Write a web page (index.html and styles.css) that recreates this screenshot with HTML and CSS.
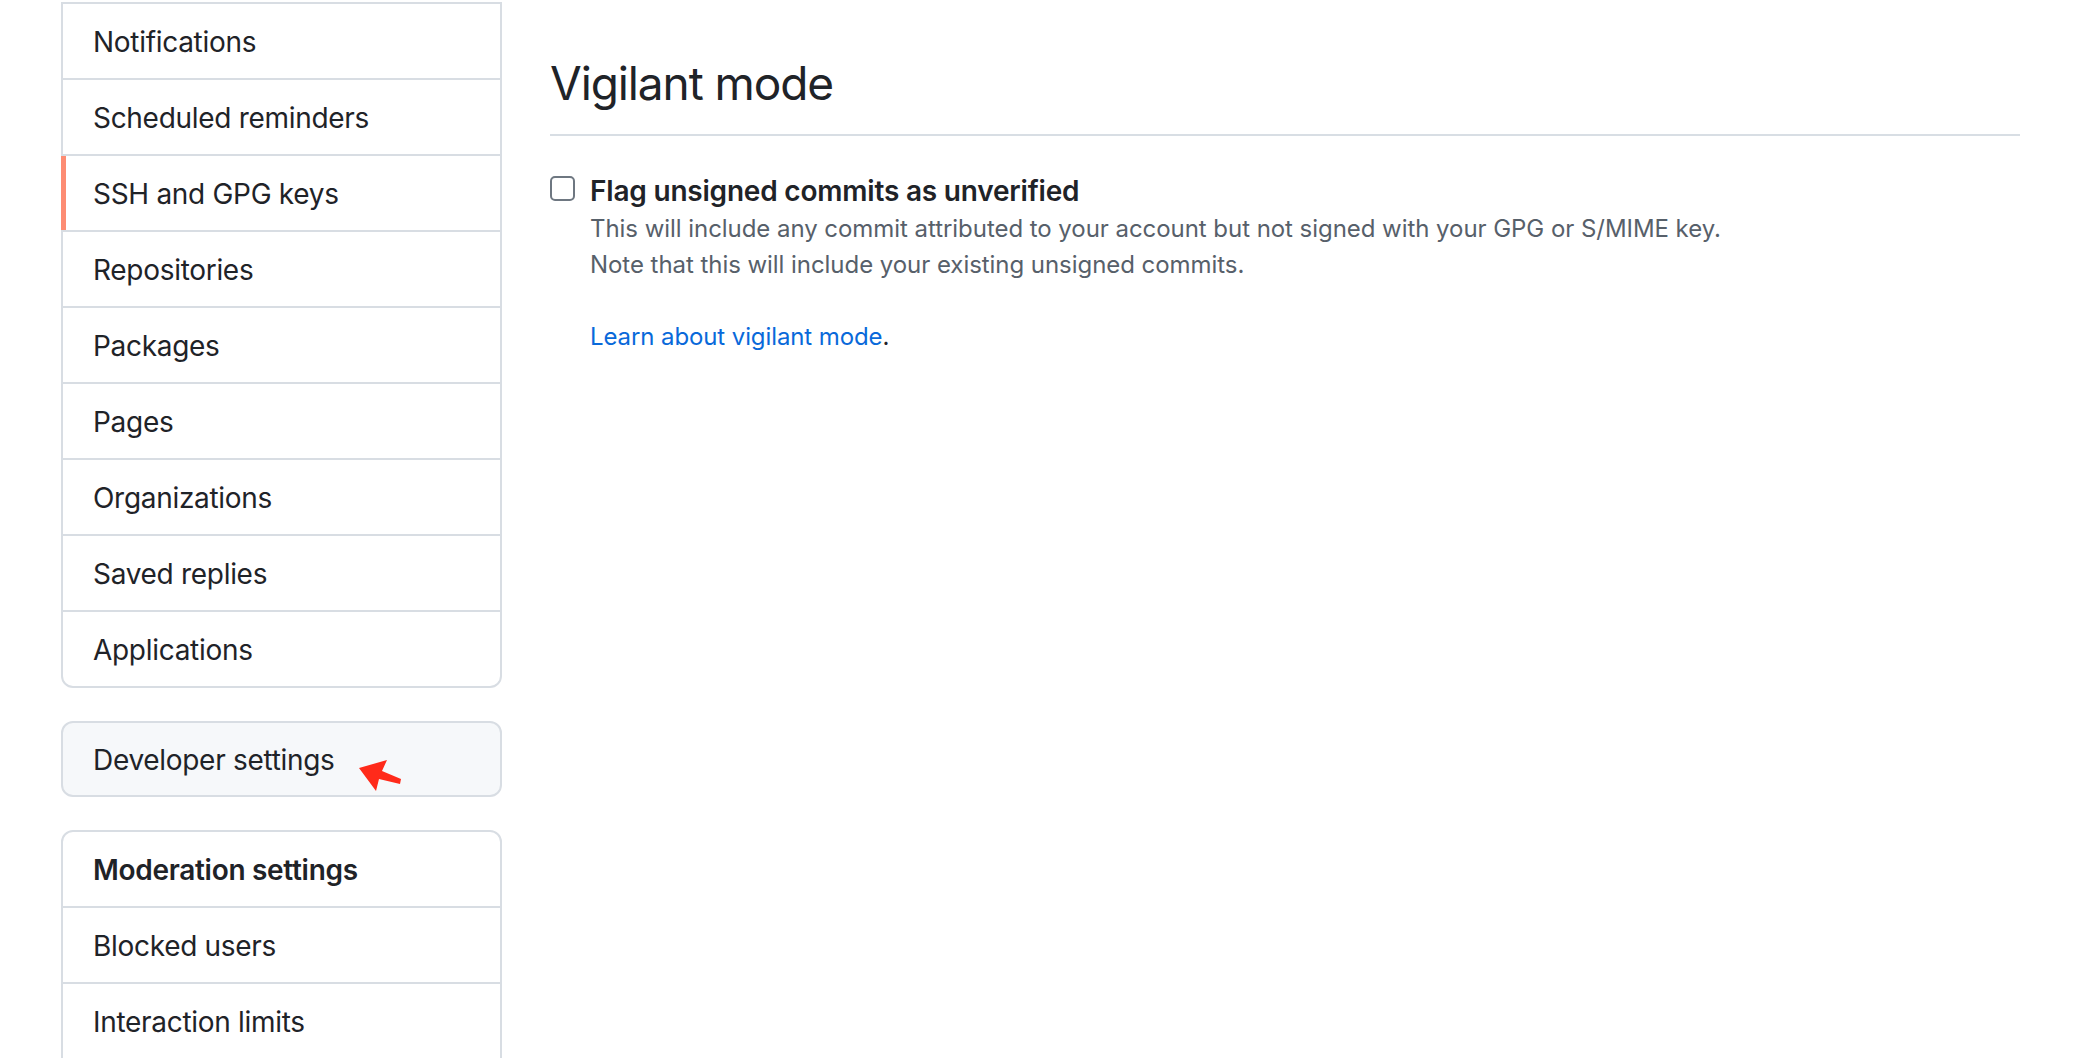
FILE: index.html
```html
<!DOCTYPE html>
<html lang="en">
<head>
<meta charset="utf-8">
<title>Vigilant mode</title>
<link rel="stylesheet" href="styles.css">
</head>
<body>
<div class="page">
  <aside class="sidebar">
    <nav class="menu menu-first">
      <a class="menu-item">Notifications</a>
      <a class="menu-item">Scheduled reminders</a>
      <a class="menu-item selected">SSH and GPG keys</a>
      <a class="menu-item">Repositories</a>
      <a class="menu-item">Packages</a>
      <a class="menu-item">Pages</a>
      <a class="menu-item">Organizations</a>
      <a class="menu-item">Saved replies</a>
      <a class="menu-item">Applications</a>
    </nav>
    <nav class="menu menu-dev">
      <a class="menu-item">Developer settings</a>
      <svg class="annot-arrow" width="50" height="40" viewBox="0 0 50 40" aria-hidden="true"><polygon points="4,13 32,5 27,16 46,24 45,29 24,24 21,36" fill="#ff2a1a"/></svg>
    </nav>
    <nav class="menu menu-mod">
      <div class="menu-heading">Moderation settings</div>
      <a class="menu-item">Blocked users</a>
      <a class="menu-item">Interaction limits</a>
    </nav>
  </aside>
  <main class="main">
    <div class="subhead">
      <h2 class="subhead-heading">Vigilant mode</h2>
    </div>
    <div class="form-checkbox">
      <input type="checkbox" class="checkbox" id="vigilant">
      <div class="form-text">
        <label class="checkbox-label" for="vigilant">Flag unsigned commits as unverified</label>
        <p class="note">This will include any commit attributed to your account but not signed with your GPG or S/MIME key.<br>Note that this will include your existing unsigned commits.</p>
        <p class="learn"><a class="link">Learn about vigilant mode</a>.</p>
      </div>
    </div>
  </main>
</div>
</body>
</html>
```
FILE: styles.css
```css
html, body {
  margin: 0;
  padding: 0;
  background: #ffffff;
}
body {
  font-family: Inter, "Liberation Sans", Arial, sans-serif;
  color: #1f2328;
  overflow: hidden;
  height: 1058px;
}
.page {
  display: flex;
  padding: 2px 62px 0 61px;
}
.sidebar {
  width: 441px;
  flex: none;
  display: flex;
  flex-direction: column;
  gap: 33px;
}
.menu {
  position: relative;
  border: 2px solid #d8dde3;
  border-radius: 12px;
  background: #ffffff;
}
.menu-first {
  border-top-left-radius: 0;
  border-top-right-radius: 0;
}
.menu-mod {
  padding-bottom: 24px;
}
.menu-item, .menu-heading {
  position: relative;
  display: block;
  padding: 18px 30px 16px 30px;
  font-size: 28px;
  line-height: 40px;
  letter-spacing: -0.3px;
  color: #1f2328;
  border-bottom: 2px solid #d8dde3;
}
.menu-item:last-child, .menu-dev .menu-item {
  border-bottom: none;
}
.menu-heading {
  font-weight: 600;
}
.menu-item.selected::before {
  content: "";
  position: absolute;
  left: -2px;
  top: 0;
  bottom: 0;
  width: 5px;
  background: #fd8c73;
}
.menu-dev {
  background: #f6f8fa;
}
.menu-dev .menu-item {
  padding-top: 17px;
  padding-bottom: 15px;
}
.annot-arrow {
  position: absolute;
  left: 292px;
  top: 32px;
}
.main {
  flex: 1;
  margin-left: 48px;
  padding-top: 52px;
}
.subhead {
  border-bottom: 2px solid #d8dee4;
  padding-bottom: 22px;
  margin-bottom: 35px;
}
.subhead-heading {
  margin: 0;
  font-size: 46px;
  line-height: 58px;
  font-weight: 400;
  letter-spacing: -1.1px;
  color: #1f2328;
}
.form-checkbox {
  display: flex;
  gap: 15px;
}
.checkbox {
  appearance: none;
  -webkit-appearance: none;
  margin: 5px 0 0 0;
  width: 25px;
  height: 25px;
  border: 2px solid #6e7781;
  border-radius: 5px;
  background: #ffffff;
  flex: none;
  box-sizing: border-box;
}
.form-text {
  display: flex;
  flex-direction: column;
}
.checkbox-label {
  font-size: 28px;
  line-height: 40px;
  font-weight: 600;
  letter-spacing: -0.2px;
  color: #1f2328;
}
.note {
  margin: 0;
  font-size: 24px;
  line-height: 36px;
  letter-spacing: -0.05px;
  color: #57606a;
}
.learn {
  margin: 34px 0 0 0;
  font-size: 24px;
  line-height: 40px;
  letter-spacing: -0.1px;
  color: #1f2328;
}
.link {
  color: #0969da;
  cursor: pointer;
}
```
